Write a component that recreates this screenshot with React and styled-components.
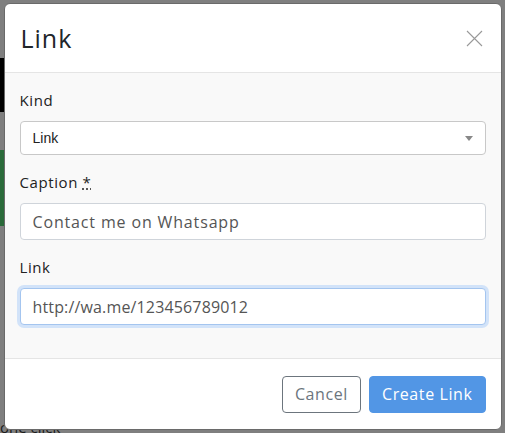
import React from 'react';
import styled, { createGlobalStyle } from 'styled-components';

const GlobalStyle = createGlobalStyle`
	html, body {
		margin: 0;
		padding: 0;
		width: 505px;
		height: 433px;
		overflow: hidden;
		background: #7f7f7f;
	}
	* {
		box-sizing: border-box;
	}
`;

const Page = styled.div`
	position: relative;
	width: 505px;
	height: 433px;
	background: #7f7f7f;
	font-family: 'Open Sans', 'Noto Sans', sans-serif;
`;

const Backdrop = styled.div`
	position: absolute;
	inset: 0;
	display: flex;
	align-items: flex-start;
	justify-content: center;
	padding-top: 3px;
`;

const Behind = styled.div`
	position: absolute;
	left: 0;
	width: ${(p) => p.w}px;
	top: ${(p) => p.top}px;
	height: ${(p) => p.h}px;
	background: ${(p) => p.bg};
`;

const BehindText = styled.div`
	position: absolute;
	left: 0;
	top: 421px;
	font-size: 15px;
	line-height: 12px;
	color: #1a1a1a;
	font-family: 'Open Sans', sans-serif;
`;

const Dialog = styled.div`
	position: relative;
	width: 498px;
	height: 427px;
	background: #fff;
	border: 1px solid #6a6a6a;
	border-radius: 6px;
	overflow: hidden;
	display: flex;
	flex-direction: column;
	color: #212529;
`;

const Header = styled.div`
	height: 69px;
	display: flex;
	align-items: center;
	justify-content: space-between;
	padding: 0 16px 0 16px;
	border-bottom: 1px solid #e5e5e5;
	flex-shrink: 0;
`;

const Title = styled.h2`
	margin: 0;
	font-size: 25px;
	font-weight: 400;
	color: #212529;
	letter-spacing: 1px;
`;

const Close = styled.button`
	border: none;
	background: none;
	padding: 0;
	width: 20px;
	height: 20px;
	display: flex;
	align-items: center;
	justify-content: center;
	cursor: pointer;
`;

const Body = styled.div`
	flex: 1;
	background: #f9f9f9;
	padding: 16px 15px 0 15px;
	border-bottom: 1px solid #e5e5e5;
`;

const Field = styled.div`
	margin-bottom: 16px;
`;

const Label = styled.label`
	display: block;
	font-size: 15px;
	line-height: 22px;
	color: #222;
	margin-bottom: 10px;
	letter-spacing: 0.6px;
`;

const Required = styled.abbr`
	text-decoration: underline dotted;
	cursor: help;
`;

const SelectBox = styled.div`
	height: 34px;
	background: #fff;
	border: 1px solid #c8c8c8;
	border-radius: 4px;
	display: flex;
	align-items: center;
	justify-content: space-between;
	padding: 0 12px 0 12px;
	font-family: 'Liberation Sans', Arial, sans-serif;
	font-size: 14px;
	color: #222;
`;

const Caret = styled.span`
	width: 0;
	height: 0;
	border-left: 4px solid transparent;
	border-right: 4px solid transparent;
	border-top: 5px solid #888;
`;

const Input = styled.input`
	display: block;
	width: 100%;
	height: 37px;
	background: #fff;
	border: 1px solid ${(p) => (p.focused ? '#a4c5ef' : '#cfd4da')};
	box-shadow: ${(p) => (p.focused ? '0 0 0 3px #d2e3f9' : 'none')};
	border-radius: 4px;
	padding: 0 12px;
	font-family: 'Open Sans', sans-serif;
	font-size: 16px;
	color: #555;
	outline: none;
	letter-spacing: ${(p) => p.spacing || 0.85}px;
	caret-color: #000;
`;

const Footer = styled.div`
	height: 70px;
	display: flex;
	align-items: center;
	justify-content: flex-end;
	gap: 8px;
	padding: 0 15px;
	flex-shrink: 0;
`;

const Button = styled.button`
	height: 37px;
	padding: 0 12px;
	border-radius: 4px;
	font-family: 'Open Sans', sans-serif;
	font-size: 16px;
	letter-spacing: 0.6px;
	cursor: pointer;
	border: 1px solid ${(p) => (p.primary ? '#5296e5' : '#6c757d')};
	background: ${(p) => (p.primary ? '#5296e5' : '#fff')};
	color: ${(p) => (p.primary ? '#fff' : '#6c757d')};
`;

function CloseIcon() {
	return (
		<svg width="17" height="17" viewBox="0 0 17 17">
			<path d="M1 1 L16 16 M16 1 L1 16" stroke="#999" strokeWidth="1.1" fill="none" />
		</svg>
	);
}

class App extends React.Component {
	render() {
		return (
			<Page>
				<GlobalStyle />
				<Behind top={58} h={54} w={4} bg="#000" />
				<Behind top={150} h={76} w={4} bg="#2a6a3a" />
				<BehindText>one click</BehindText>
				<Backdrop>
					<Dialog>
						<Header>
							<Title>Link</Title>
							<Close aria-label="Close">
								<CloseIcon />
							</Close>
						</Header>
						<Body>
							<Field>
								<Label>Kind</Label>
								<SelectBox>
									<span>Link</span>
									<Caret />
								</SelectBox>
							</Field>
							<Field>
								<Label>
									Caption <Required title="required">*</Required>
								</Label>
								<Input defaultValue="Contact me on Whatsapp" />
							</Field>
							<Field>
								<Label>Link</Label>
								<Input focused spacing={0.15} defaultValue="http://wa.me/123456789012" />
							</Field>
						</Body>
						<Footer>
							<Button>Cancel</Button>
							<Button primary>Create Link</Button>
						</Footer>
					</Dialog>
				</Backdrop>
			</Page>
		);
	}
}

export default App;
